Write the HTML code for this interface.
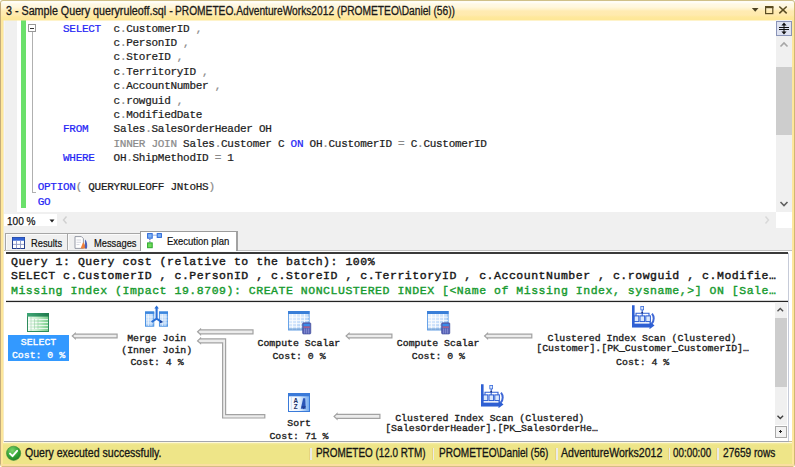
<!DOCTYPE html>
<html>
<head>
<meta charset="utf-8">
<title>Sample Query</title>
<style>
html,body{margin:0;padding:0;}
body{width:795px;height:467px;overflow:hidden;position:relative;background:#fff;font-family:"Liberation Sans",sans-serif;}
.abs{position:absolute;}
#frame{left:0;top:0;width:795px;height:467px;background:#cfc088;border-radius:3px;}
#titlebar{left:1px;top:1px;width:793px;height:20px;border-radius:2px 2px 0 0;background:linear-gradient(#fffdf6 0,#fffdf6 1.5px,#fff9e4 3px,#fff7de 6px,#fff1c6 8.5px,#ffebb2 10px,#ffeaae 14px,#fee89c 16px,#fee796 19px,#fef2c6 19px,#fef2c6 20px);}
#title,#title2,#title3{white-space:pre;left:5.8px;top:3.5px;font-size:12px;line-height:15px;color:#1a1a1a;-webkit-text-stroke:0.3px #1a1a1a;white-space:nowrap;transform-origin:0 0;transform:scaleX(0.8662);}
#editor{left:4px;top:20px;width:788px;height:192px;background:#fff;}
#gutter{left:4px;top:20px;width:13px;height:192px;background:#f0f0f0;border-left:1px solid #f5f3fa;box-sizing:border-box;}
#greenbar{left:21px;top:20px;width:5px;height:188px;background:#6be06b;}
.code{left:37.7px;font-family:"Liberation Mono",monospace;font-size:11px;letter-spacing:-0.28px;line-height:14.42px;white-space:pre;color:#1c1c1c;-webkit-text-stroke:0.22px currentColor;}
.kw{color:#2424f5;}
.gr{color:#8a8a8a;}
#hbar{left:4px;top:212px;width:788px;height:16px;background:#f0f0f0;}
#below{left:4px;top:228px;width:788px;height:22px;background:#f0f0f0;}
#results{left:4px;top:251px;width:788px;height:190px;background:#fff;}
.hdr{left:11px;font-family:"Liberation Mono",monospace;font-weight:normal;-webkit-text-stroke:0.4px currentColor;font-size:11.5px;letter-spacing:0.53px;line-height:14.5px;white-space:pre;color:#161616;}
#status{left:3px;top:443px;width:789px;height:21px;background:linear-gradient(#f4eca4 0,#eee588 2px,#eee588 100%);}
.st{top:445.8px;font-size:11.9px;line-height:15px;color:#151515;-webkit-text-stroke:0.3px #151515;white-space:nowrap;transform-origin:0 0;transform:scaleX(0.9);}
.node{font-family:"Liberation Mono",monospace;font-weight:normal;-webkit-text-stroke:0.35px currentColor;font-size:9.85px;line-height:12px;white-space:pre;color:#222;text-align:center;}
.tab{font-size:11px;line-height:14px;color:#111;-webkit-text-stroke:0.2px #111;white-space:nowrap;transform-origin:0 0;transform:scaleX(0.848);}
.sep{top:448px;width:1.5px;height:12px;background:#ecebe6;box-shadow:-1px 0 0 #e6d47e;}
</style>
</head>
<body>
<div id="frame" class="abs"></div>
<div id="titlebar" class="abs"></div>
<div class="abs" style="left:0;top:3px;width:1px;height:461px;background:#c4ac7c"></div>
<div class="abs" style="left:1px;top:20px;width:2px;height:447px;background:#fee79c"></div>
<div class="abs" style="left:3px;top:20px;width:1px;height:423px;background:#f6ecc6"></div>
<div class="abs" style="left:792px;top:20px;width:2px;height:447px;background:#fee79c"></div>
<div class="abs" style="left:794px;top:3px;width:1px;height:461px;background:#cfb874"></div>
<div id="title" class="abs" style="transform:scaleX(0.8937)">3 - Sample Query queryruleoff.sql - </div>
<div id="title2" class="abs" style="left:175.3px;transform:scaleX(0.8497)">PROMETEO.AdventureWorks2012 </div>
<div id="title3" class="abs" style="left:337.2px;transform:scaleX(0.8507)">(PROMETEO\Daniel (56))</div>
<svg class="abs" style="left:748px;top:2px" width="44" height="17" viewBox="0 0 44 17"><path d="M3.9 5.9h6.6L7.2 9.8z" fill="#4b4122"/><rect x="17.6" y="5.2" width="7.2" height="6.4" fill="none" stroke="#5a4c22" stroke-width="1.2"/><rect x="17" y="4" width="8.4" height="2.2" fill="#5a4c22"/><path d="M31.3 4.5l7.4 6.9M38.7 4.5l-7.4 6.9" stroke="#5a4c22" stroke-width="1.5" fill="none"/></svg>
<div id="editor" class="abs"></div>
<div id="gutter" class="abs"></div>
<div id="greenbar" class="abs"></div>
<div class="abs code" style="top:21.50px">    <span class="kw">SELECT</span>  c<span class="gr">.</span>CustomerID <span class="gr">,</span></div>
<div class="abs code" style="top:35.92px">            c<span class="gr">.</span>PersonID <span class="gr">,</span></div>
<div class="abs code" style="top:50.34px">            c<span class="gr">.</span>StoreID <span class="gr">,</span></div>
<div class="abs code" style="top:64.76px">            c<span class="gr">.</span>TerritoryID <span class="gr">,</span></div>
<div class="abs code" style="top:79.18px">            c<span class="gr">.</span>AccountNumber <span class="gr">,</span></div>
<div class="abs code" style="top:93.60px">            c<span class="gr">.</span>rowguid <span class="gr">,</span></div>
<div class="abs code" style="top:108.02px">            c<span class="gr">.</span>ModifiedDate</div>
<div class="abs code" style="top:122.44px">    <span class="kw">FROM</span>    Sales<span class="gr">.</span>SalesOrderHeader OH</div>
<div class="abs code" style="top:136.86px">            <span class="gr">INNER JOIN</span> Sales<span class="gr">.</span>Customer C <span class="kw">ON</span> OH<span class="gr">.</span>CustomerID <span class="gr">=</span> C<span class="gr">.</span>CustomerID</div>
<div class="abs code" style="top:151.28px">    <span class="kw">WHERE</span>   OH<span class="gr">.</span>ShipMethodID <span class="gr">=</span> 1</div>
<div class="abs code" style="top:180.12px"><span class="kw">OPTION</span><span class="gr">(</span> QUERYRULEOFF JNtoHS<span class="gr">)</span></div>
<div class="abs code" style="top:194.54px"><span class="kw">GO</span></div>
<div class="abs" style="left:1px;top:20px;width:793px;height:1px;background:rgba(254,231,150,0.5)"></div>
<div id="hbar" class="abs"></div>
<div id="below" class="abs"></div>

<!-- fold box -->
<div class="abs" style="left:32px;top:32px;width:1px;height:161px;background:#b0b0b0"></div>
<div class="abs" style="left:32px;top:192px;width:4px;height:1px;background:#b0b0b0"></div>
<div class="abs" style="left:28px;top:24px;width:6px;height:6px;border:1px solid #989898;background:#fff"></div>
<div class="abs" style="left:30px;top:28px;width:4px;height:1px;background:#333"></div>
<!-- editor vscroll -->
<div class="abs" style="left:776px;top:20px;width:16px;height:192px;background:#f0f0f0"></div>
<div class="abs" style="left:776px;top:21px;width:14px;height:13px;border:1px solid #8a94b8;background:#dfe3f1"></div>
<svg class="abs" style="left:776px;top:20px" width="16" height="16" viewBox="0 0 16 16"><path d="M3 7.5h10M3 9.5h10" stroke="#111" stroke-width="1" fill="none"/><path d="M8 2.5l-2.6 3h5.2zM8 14.5l-2.6-3h5.2z" fill="#111"/><path d="M8 4v9" stroke="#111" stroke-width="1"/></svg>
<svg class="abs" style="left:776px;top:36px" width="16" height="16" viewBox="0 0 16 16"><path d="M4.5 10.5L8 7l3.5 3.5" stroke="#a6a6a6" stroke-width="1.6" fill="none"/></svg>
<div class="abs" style="left:776px;top:67px;width:16px;height:68px;background:#cdcdcd"></div>
<svg class="abs" style="left:776px;top:196px" width="16" height="16" viewBox="0 0 16 16"><path d="M4.5 6L8 9.5 11.5 6" stroke="#606060" stroke-width="1.6" fill="none"/></svg>
<div class="abs" style="left:776px;top:212px;width:16px;height:16px;background:#fff"></div>
<!-- hbar contents -->
<div class="abs" style="left:4px;top:214px;width:52.5px;height:12px;background:#fff"></div>
<div class="abs" style="left:7.3px;top:212.8px;font-size:11.7px;line-height:15px;color:#111;-webkit-text-stroke:0.25px #111;transform-origin:0 0;transform:scaleX(0.86)">100 %</div>
<svg class="abs" style="left:48.3px;top:217.5px" width="8" height="6" viewBox="0 0 8 6"><path d="M1.5 1.5h5L4 4.5z" fill="#222"/></svg>
<svg class="abs" style="left:60px;top:214px" width="10" height="12" viewBox="0 0 10 12"><path d="M6.5 2.5L3.5 6l3 3.5" stroke="#d0d0d0" stroke-width="1.4" fill="none"/></svg>
<svg class="abs" style="left:762px;top:214px" width="10" height="12" viewBox="0 0 10 12"><path d="M3.5 2.5L6.5 6l-3 3.5" stroke="#d8d8d8" stroke-width="1.4" fill="none"/></svg>
<!-- tabs -->
<div class="abs" style="left:5px;top:250px;width:787px;height:1px;background:#c2c2c2"></div>
<div class="abs" style="left:5px;top:251px;width:787px;height:1px;background:#fff"></div>
<div class="abs" style="left:5px;top:233px;width:63px;height:17px;border:1px solid #a6a6a6;border-bottom:none;background:#f0f0f0;box-sizing:border-box;box-shadow:inset 1px 1px 0 #fbfbfb"></div>
<div class="abs" style="left:67px;top:233px;width:74px;height:17px;border:1px solid #a6a6a6;border-bottom:none;background:#f0f0f0;box-sizing:border-box;box-shadow:inset 1px 1px 0 #fbfbfb"></div>
<div class="abs" style="left:140px;top:231px;width:98px;height:21px;border:1px solid #9c9c9c;border-right:2px solid #a2a2a2;border-bottom:none;background:#fff;box-sizing:border-box"></div>
<svg class="abs" style="left:11.5px;top:236.5px" width="13" height="12" viewBox="0 0 13 12"><rect x="0.5" y="0.5" width="12" height="11" fill="#fff" stroke="#27408c" stroke-width="1"/><rect x="0.5" y="0.5" width="12" height="3.2" fill="#2f62d6"/><path d="M4.5 3.5v8M8.5 3.5v8M1 7.4h11" stroke="#8b96c4" stroke-width="0.9"/></svg>
<svg class="abs" style="left:74px;top:235.5px" width="15" height="13" viewBox="0 0 15 13"><path d="M1 0.6h6.4l2 2v9.8H1z" fill="#fff" stroke="#8a8f9c" stroke-width="0.9"/><path d="M2.5 4h4.5M2.5 6.3h4.5M2.5 8.6h3" stroke="#c9ccd6" stroke-width="0.8"/><path d="M9.2 6l3.8 6.4H6.6z" fill="#f0813a"/><path d="M11 3.5c2 1.6 2.6 5.4 2 8.9h-2.2z" fill="#4a62b8"/></svg>
<svg class="abs" style="left:146.5px;top:233px" width="16" height="16" viewBox="0 0 16 16"><rect x="0.6" y="0.6" width="4.6" height="4.6" fill="#7fb2f2" stroke="#2a66d8" stroke-width="1"/><rect x="10.2" y="0.6" width="4.2" height="3.8" fill="#7fb2f2" stroke="#2a66d8" stroke-width="1"/><path d="M6.5 2.2h3" stroke="#2a66d8" stroke-width="1" stroke-dasharray="1 1"/><path d="M2.9 6v3.5" stroke="#3a4a9a" stroke-width="1" stroke-dasharray="1.2 1"/><rect x="0.6" y="9.9" width="4.6" height="4.8" fill="#6fdc5a" stroke="#2aa62a" stroke-width="1"/></svg>
<div class="abs tab" style="left:31px;top:236px">Results</div>
<div class="abs tab" style="left:93.5px;top:236px">Messages</div>
<div class="abs tab" style="left:167.3px;top:234.3px;transform:scaleX(0.862)">Execution plan</div>
<div id="results" class="abs"></div>

<div class="abs hdr" style="top:255px">Query 1: Query cost (relative to the batch): 100%</div>
<div class="abs hdr" style="top:269px">SELECT c.CustomerID , c.PersonID , c.StoreID , c.TerritoryID , c.AccountNumber , c.rowguid , c.Modifie…</div>
<div class="abs hdr" style="top:284px;color:#169a2e">Missing Index (Impact 19.8709): CREATE NONCLUSTERED INDEX [&lt;Name of Missing Index, sysname,&gt;] ON [Sale…</div>
<div class="abs" style="left:6px;top:300px;width:782px;height:1px;background:#d4d4d4"></div><div class="abs" style="left:6px;top:301px;width:782px;height:1px;background:#242424"></div><div class="abs" style="left:6px;top:302px;width:782px;height:1px;background:#ececec"></div>
<div class="abs" style="left:6px;top:252px;width:782px;height:2px;background:#3a3a3a"></div>

<div class="abs" style="left:8px;top:335px;width:61px;height:26px;background:#3399ff"></div>
<div class="abs node" style="left:-111.5px;top:337.36px;width:300px;color:#fff">SELECT</div>
<div class="abs node" style="left:-111.5px;top:350.36px;width:300px;color:#fff">Cost: 0 %</div>
<div class="abs node" style="left:6.7px;top:333.00px;width:300px">Merge Join</div>
<div class="abs node" style="left:6.7px;top:345.00px;width:300px">(Inner Join)</div>
<div class="abs node" style="left:7.0px;top:357.00px;width:300px">Cost: 4 %</div>
<div class="abs node" style="left:148.9px;top:338.00px;width:300px">Compute Scalar</div>
<div class="abs node" style="left:149.0px;top:351.00px;width:300px">Cost: 0 %</div>
<div class="abs node" style="left:288.2px;top:338.00px;width:300px">Compute Scalar</div>
<div class="abs node" style="left:288.4px;top:351.00px;width:300px">Cost: 0 %</div>
<div class="abs node" style="left:492.0px;top:333.00px;width:300px">Clustered Index Scan (Clustered)</div>
<div class="abs node" style="left:492.6px;top:343.00px;width:300px">[Customer].[PK_Customer_CustomerID]…</div>
<div class="abs node" style="left:492.7px;top:357.00px;width:300px">Cost: 4 %</div>
<div class="abs node" style="left:149.2px;top:418.00px;width:300px">Sort</div>
<div class="abs node" style="left:149.0px;top:431.00px;width:300px">Cost: 71 %</div>
<div class="abs node" style="left:339.7px;top:413.00px;width:300px">Clustered Index Scan (Clustered)</div>
<div class="abs node" style="left:341.5px;top:423.00px;width:300px">[SalesOrderHeader].[PK_SalesOrderHe…</div>
<svg class="abs" style="left:0;top:0" width="795" height="467" viewBox="0 0 795 467"><defs><linearGradient id="cg" x1="0" y1="0" x2="1" y2="1"><stop offset="0" stop-color="#f2f8ff"/><stop offset="0.5" stop-color="#cfe3fb"/><stop offset="1" stop-color="#8fbcf0"/></linearGradient></defs><g fill="#ececec" stroke="#a2a2a2" stroke-width="1.2" stroke-linejoin="miter"><polygon points="72.3,336.0 75.2,333.3 75.2,334.1 117.1,334.1 117.1,337.9 75.2,337.9 75.2,338.7"/><polygon points="197.6,331.8 200.5,329.1 200.5,329.9 253.0,329.9 253.0,333.8 200.5,333.8 200.5,334.5"/><polygon points="346.1,336.0 349.0,333.3 349.0,334.1 391.9,334.1 391.9,337.9 349.0,337.9 349.0,338.7"/><polygon points="484.6,336.0 487.5,333.3 487.5,334.1 531.8,334.1 531.8,337.9 487.5,337.9 487.5,338.7"/><polygon points="334.1,416.4 337.0,413.7 337.0,414.4 379.9,414.4 379.9,418.3 337.0,418.3 337.0,419.1"/><polygon points="197.6,340.9 200.5,338.2 200.5,338.9 225.6,338.9 225.6,414.6 264.8,414.6 264.8,418 222.6,418 222.6,342.8 200.5,342.8 200.5,343.5"/></g></svg>
<svg class="abs" style="left:27px;top:312.5px" width="22" height="19" viewBox="0 0 22 19">
<defs><linearGradient id="sg" x1="0" x2="1" y1="0" y2="0"><stop offset="0" stop-color="#f4fcf4"/><stop offset="0.45" stop-color="#c9efce"/><stop offset="1" stop-color="#78cc8a"/></linearGradient>
<linearGradient id="sh" x1="0" x2="1"><stop offset="0" stop-color="#3fa777"/><stop offset="1" stop-color="#1f7a4c"/></linearGradient></defs>
<rect x="0.5" y="0.5" width="21" height="18" fill="url(#sg)" stroke="#2e8b5c" stroke-width="1"/>
<rect x="0" y="0" width="22" height="3.6" fill="url(#sh)"/>
<path d="M1 6.5h20M1 9.5h20M1 12.5h20M1 15.5h20" stroke="#fff" stroke-width="0.9" opacity="0.85"/>
<path d="M4 4v14M7.5 6v10M11 6v10" stroke="#7fb894" stroke-width="0.6" opacity="0.7"/>
</svg>
<svg class="abs" style="left:145px;top:305px" width="23" height="22" viewBox="0 0 23 22">
<defs><linearGradient id="tb" x1="0" x2="1" y1="0" y2="1"><stop offset="0" stop-color="#e6f1fe"/><stop offset="1" stop-color="#8dbdf3"/></linearGradient></defs>
<rect x="0.5" y="7" width="8.3" height="14.2" fill="url(#tb)" stroke="#3f8ae0" stroke-width="0.9"/>
<rect x="0.1" y="6.5" width="9.1" height="2.4" fill="#3b86de"/>
<path d="M1 12h7.5M1 15h7.5M1 18h7.5M3.5 9v12M6 9v12" stroke="#fff" stroke-width="0.7" opacity="0.8"/>
<rect x="14.4" y="7" width="8.3" height="14.2" fill="url(#tb)" stroke="#3f8ae0" stroke-width="0.9"/>
<rect x="14" y="6.5" width="9.1" height="2.4" fill="#3b86de"/>
<path d="M15 12h7.5M15 15h7.5M15 18h7.5M17.5 9v12M20 9v12" stroke="#fff" stroke-width="0.7" opacity="0.8"/>
<path d="M11.6 2.5v11.5M6.6 17l5-3.4 5 3.4" stroke="#2a6fd6" stroke-width="2.1" fill="none" stroke-linejoin="round"/>
<path d="M11.6 0.6l-2.3 3h4.6z" fill="#2a6fd6"/>
<path d="M15.2 15.2l3.2 1.7-3.4 1.3z" fill="#173f9a"/>
</svg>
<svg class="abs" style="left:288px;top:310.8px" width="24" height="24" viewBox="0 0 24 24">
<rect x="0.5" y="0.5" width="20.6" height="18.5" fill="url(#cg)" stroke="#5b9be6" stroke-width="0.9"/>
<rect x="0" y="0" width="21.6" height="3" fill="#3a7fd8"/>
<path d="M1 6.2h20M1 9.4h20M1 12.6h20M1 15.8h20M4.5 3v16M8.5 3v16M12.5 3v16M16.5 3v16" stroke="#fff" stroke-width="0.9" opacity="0.9"/>
<rect x="1" y="17.3" width="19.6" height="1.8" fill="#7aa6d8" opacity="0.8"/>
<rect x="14.6" y="11.8" width="8.2" height="11.2" rx="1" fill="#5560b4" stroke="#3b4796" stroke-width="0.6"/>
<rect x="15.6" y="12.8" width="6.2" height="2.4" fill="#3a8be8"/>
<rect x="15.6" y="15.6" width="6.2" height="1" fill="#d8607a"/>
<path d="M16.7 17.5v5M18.7 17.5v5M20.7 17.5v5" stroke="#8c95d8" stroke-width="0.9"/>
</svg>
<svg class="abs" style="left:426.8px;top:310.8px" width="24" height="24" viewBox="0 0 24 24">
<rect x="0.5" y="0.5" width="20.6" height="18.5" fill="url(#cg)" stroke="#5b9be6" stroke-width="0.9"/>
<rect x="0" y="0" width="21.6" height="3" fill="#3a7fd8"/>
<path d="M1 6.2h20M1 9.4h20M1 12.6h20M1 15.8h20M4.5 3v16M8.5 3v16M12.5 3v16M16.5 3v16" stroke="#fff" stroke-width="0.9" opacity="0.9"/>
<rect x="1" y="17.3" width="19.6" height="1.8" fill="#7aa6d8" opacity="0.8"/>
<rect x="14.6" y="11.8" width="8.2" height="11.2" rx="1" fill="#5560b4" stroke="#3b4796" stroke-width="0.6"/>
<rect x="15.6" y="12.8" width="6.2" height="2.4" fill="#3a8be8"/>
<rect x="15.6" y="15.6" width="6.2" height="1" fill="#d8607a"/>
<path d="M16.7 17.5v5M18.7 17.5v5M20.7 17.5v5" stroke="#8c95d8" stroke-width="0.9"/>
</svg>
<svg class="abs" style="left:288px;top:393px" width="22" height="19" viewBox="0 0 22 19">
<defs><linearGradient id="so" x1="0" x2="1"><stop offset="0" stop-color="#ffffff"/><stop offset="0.5" stop-color="#eaf3fe"/><stop offset="1" stop-color="#6fa8ee"/></linearGradient></defs>
<rect x="0.5" y="0.5" width="21" height="18" fill="url(#so)" stroke="#3a7ad9" stroke-width="1"/>
<rect x="0" y="0" width="22" height="3.3" fill="#3a7ad9"/>
<path d="M3.3 4.5v12.5" stroke="#8ab6ee" stroke-width="0.8" stroke-dasharray="1 1"/>
<text x="5.6" y="10.3" font-family="Liberation Sans, sans-serif" font-size="6.3" font-weight="bold" fill="#1a2f66">A</text>
<text x="5.8" y="16.3" font-family="Liberation Sans, sans-serif" font-size="6.3" font-weight="bold" fill="#1a2f66">Z</text>
<path d="M15.2 5.2l2 0 0.6 10.5-5 0z" fill="#2a55b8"/>
<path d="M13.5 13.2l2.2 3 2.2-3z" fill="#1f3f95"/>
</svg>
<svg class="abs" style="left:631px;top:304.5px" width="25" height="24.3" viewBox="0 0 25 23" preserveAspectRatio="none">
<path d="M2.3 0.3v19.5h16" stroke="#2e5fd3" stroke-width="2.6" fill="none"/>
<path d="M1 17.6h18.5v3.6H1z" fill="#2e5fd3"/>
<path d="M18.5 15.3l5 4-5 3.6z" fill="#2e5fd3"/>
<path d="M20.8 17.5c2.6-2.6 2.4-6.8 0.2-9.3" stroke="#3f68d6" stroke-width="2" fill="none"/>
<rect x="9.8" y="1.4" width="2.8" height="3.2" fill="#dbe8fb" stroke="#3f6fdc" stroke-width="0.8"/>
<path d="M11.2 4.8v3M5 10.6v-2.8h13v2.8M11.2 7.8v2.8" stroke="#2e5fd3" stroke-width="1.1" fill="none"/>
<rect x="3.2" y="10.3" width="4.6" height="5.4" fill="#dbe8fb" stroke="#2e5fd3" stroke-width="1"/>
<rect x="9" y="10.3" width="4.6" height="5.4" fill="#dbe8fb" stroke="#2e5fd3" stroke-width="1"/>
<rect x="14.8" y="10.3" width="4.6" height="5.4" fill="#dbe8fb" stroke="#2e5fd3" stroke-width="1"/>
<circle cx="11.2" cy="7.2" r="0.9" fill="#1c2f78"/>
</svg>
<svg class="abs" style="left:479.5px;top:384px" width="25" height="24.3" viewBox="0 0 25 23" preserveAspectRatio="none">
<path d="M2.3 0.3v19.5h16" stroke="#2e5fd3" stroke-width="2.6" fill="none"/>
<path d="M1 17.6h18.5v3.6H1z" fill="#2e5fd3"/>
<path d="M18.5 15.3l5 4-5 3.6z" fill="#2e5fd3"/>
<path d="M20.8 17.5c2.6-2.6 2.4-6.8 0.2-9.3" stroke="#3f68d6" stroke-width="2" fill="none"/>
<rect x="9.8" y="1.4" width="2.8" height="3.2" fill="#dbe8fb" stroke="#3f6fdc" stroke-width="0.8"/>
<path d="M11.2 4.8v3M5 10.6v-2.8h13v2.8M11.2 7.8v2.8" stroke="#2e5fd3" stroke-width="1.1" fill="none"/>
<rect x="3.2" y="10.3" width="4.6" height="5.4" fill="#dbe8fb" stroke="#2e5fd3" stroke-width="1"/>
<rect x="9" y="10.3" width="4.6" height="5.4" fill="#dbe8fb" stroke="#2e5fd3" stroke-width="1"/>
<rect x="14.8" y="10.3" width="4.6" height="5.4" fill="#dbe8fb" stroke="#2e5fd3" stroke-width="1"/>
<circle cx="11.2" cy="7.2" r="0.9" fill="#1c2f78"/>
</svg>
<!-- plan vscroll -->
<div class="abs" style="left:774.5px;top:302px;width:12.5px;height:123px;background:#f0f0f0"></div>
<svg class="abs" style="left:773.7px;top:303.2px" width="13" height="13" viewBox="0 0 13 13"><path d="M3.5 8.2L6.3 5.4l2.8 2.8" stroke="#505050" stroke-width="1.4" fill="none"/></svg>
<div class="abs" style="left:774.5px;top:317.5px;width:12.5px;height:69px;background:#cdcdcd"></div>
<svg class="abs" style="left:774.2px;top:411px" width="13" height="13" viewBox="0 0 13 13"><path d="M3.5 4.8L6.3 7.6l2.8-2.8" stroke="#404040" stroke-width="1.4" fill="none"/></svg>
<div class="abs" style="left:774.5px;top:425.5px;width:12px;height:12px;box-sizing:border-box;border:1px solid #a9a9a9;background:#f2f2f2"></div>
<div class="abs" style="left:779px;top:431px;width:3px;height:1px;background:#222"></div>
<div class="abs" style="left:780px;top:430px;width:1px;height:3px;background:#222"></div>
<div class="abs" style="left:788px;top:253px;width:1px;height:188px;background:#c6cbd8"></div>
<div id="status" class="abs"></div>

<div class="abs" style="left:4px;top:441px;width:785px;height:1px;background:#a4a6ae"></div>
<div class="abs" style="left:3px;top:442px;width:789px;height:1px;background:#fdf8dc"></div>
<svg class="abs" style="left:5px;top:445px" width="17" height="17" viewBox="0 0 17 17"><defs><radialGradient id="gg" cx="0.4" cy="0.3" r="0.8"><stop offset="0" stop-color="#7bd46a"/><stop offset="0.6" stop-color="#2f9e33"/><stop offset="1" stop-color="#1d7a24"/></radialGradient></defs><circle cx="8.6" cy="8.3" r="7.1" fill="url(#gg)" stroke="#3c8a3a" stroke-width="0.6"/><path d="M5 8.6l2.5 2.6 4.6-5.4" stroke="#fff" stroke-width="1.9" fill="none" stroke-linecap="round" stroke-linejoin="round"/></svg>
<div class="abs st" style="left:24.6px;transform:scaleX(0.888)">Query executed successfully.</div>
<div class="abs st" style="left:316px;transform:scaleX(0.834)">PROMETEO (12.0 RTM)</div>
<div class="abs st" style="left:438.6px;transform:scaleX(0.845)">PROMETEO\Daniel (56)</div>
<div class="abs st" style="left:560.5px;transform:scaleX(0.888)">AdventureWorks2012</div>
<div class="abs st" style="left:673.3px;transform:scaleX(0.827)">00:00:00</div>
<div class="abs st" style="left:723px;transform:scaleX(0.852)">27659 rows</div>
<div class="abs sep" style="left:310px"></div>
<div class="abs sep" style="left:432.5px"></div>
<div class="abs sep" style="left:556px"></div>
<div class="abs sep" style="left:668.5px"></div>
<div class="abs sep" style="left:717px"></div>
<div class="abs" style="left:1px;top:464px;width:793px;height:2px;background:#fbdfa0"></div><div class="abs" style="left:2px;top:466px;width:791px;height:1px;background:#d6bc86"></div>
</body>
</html>
